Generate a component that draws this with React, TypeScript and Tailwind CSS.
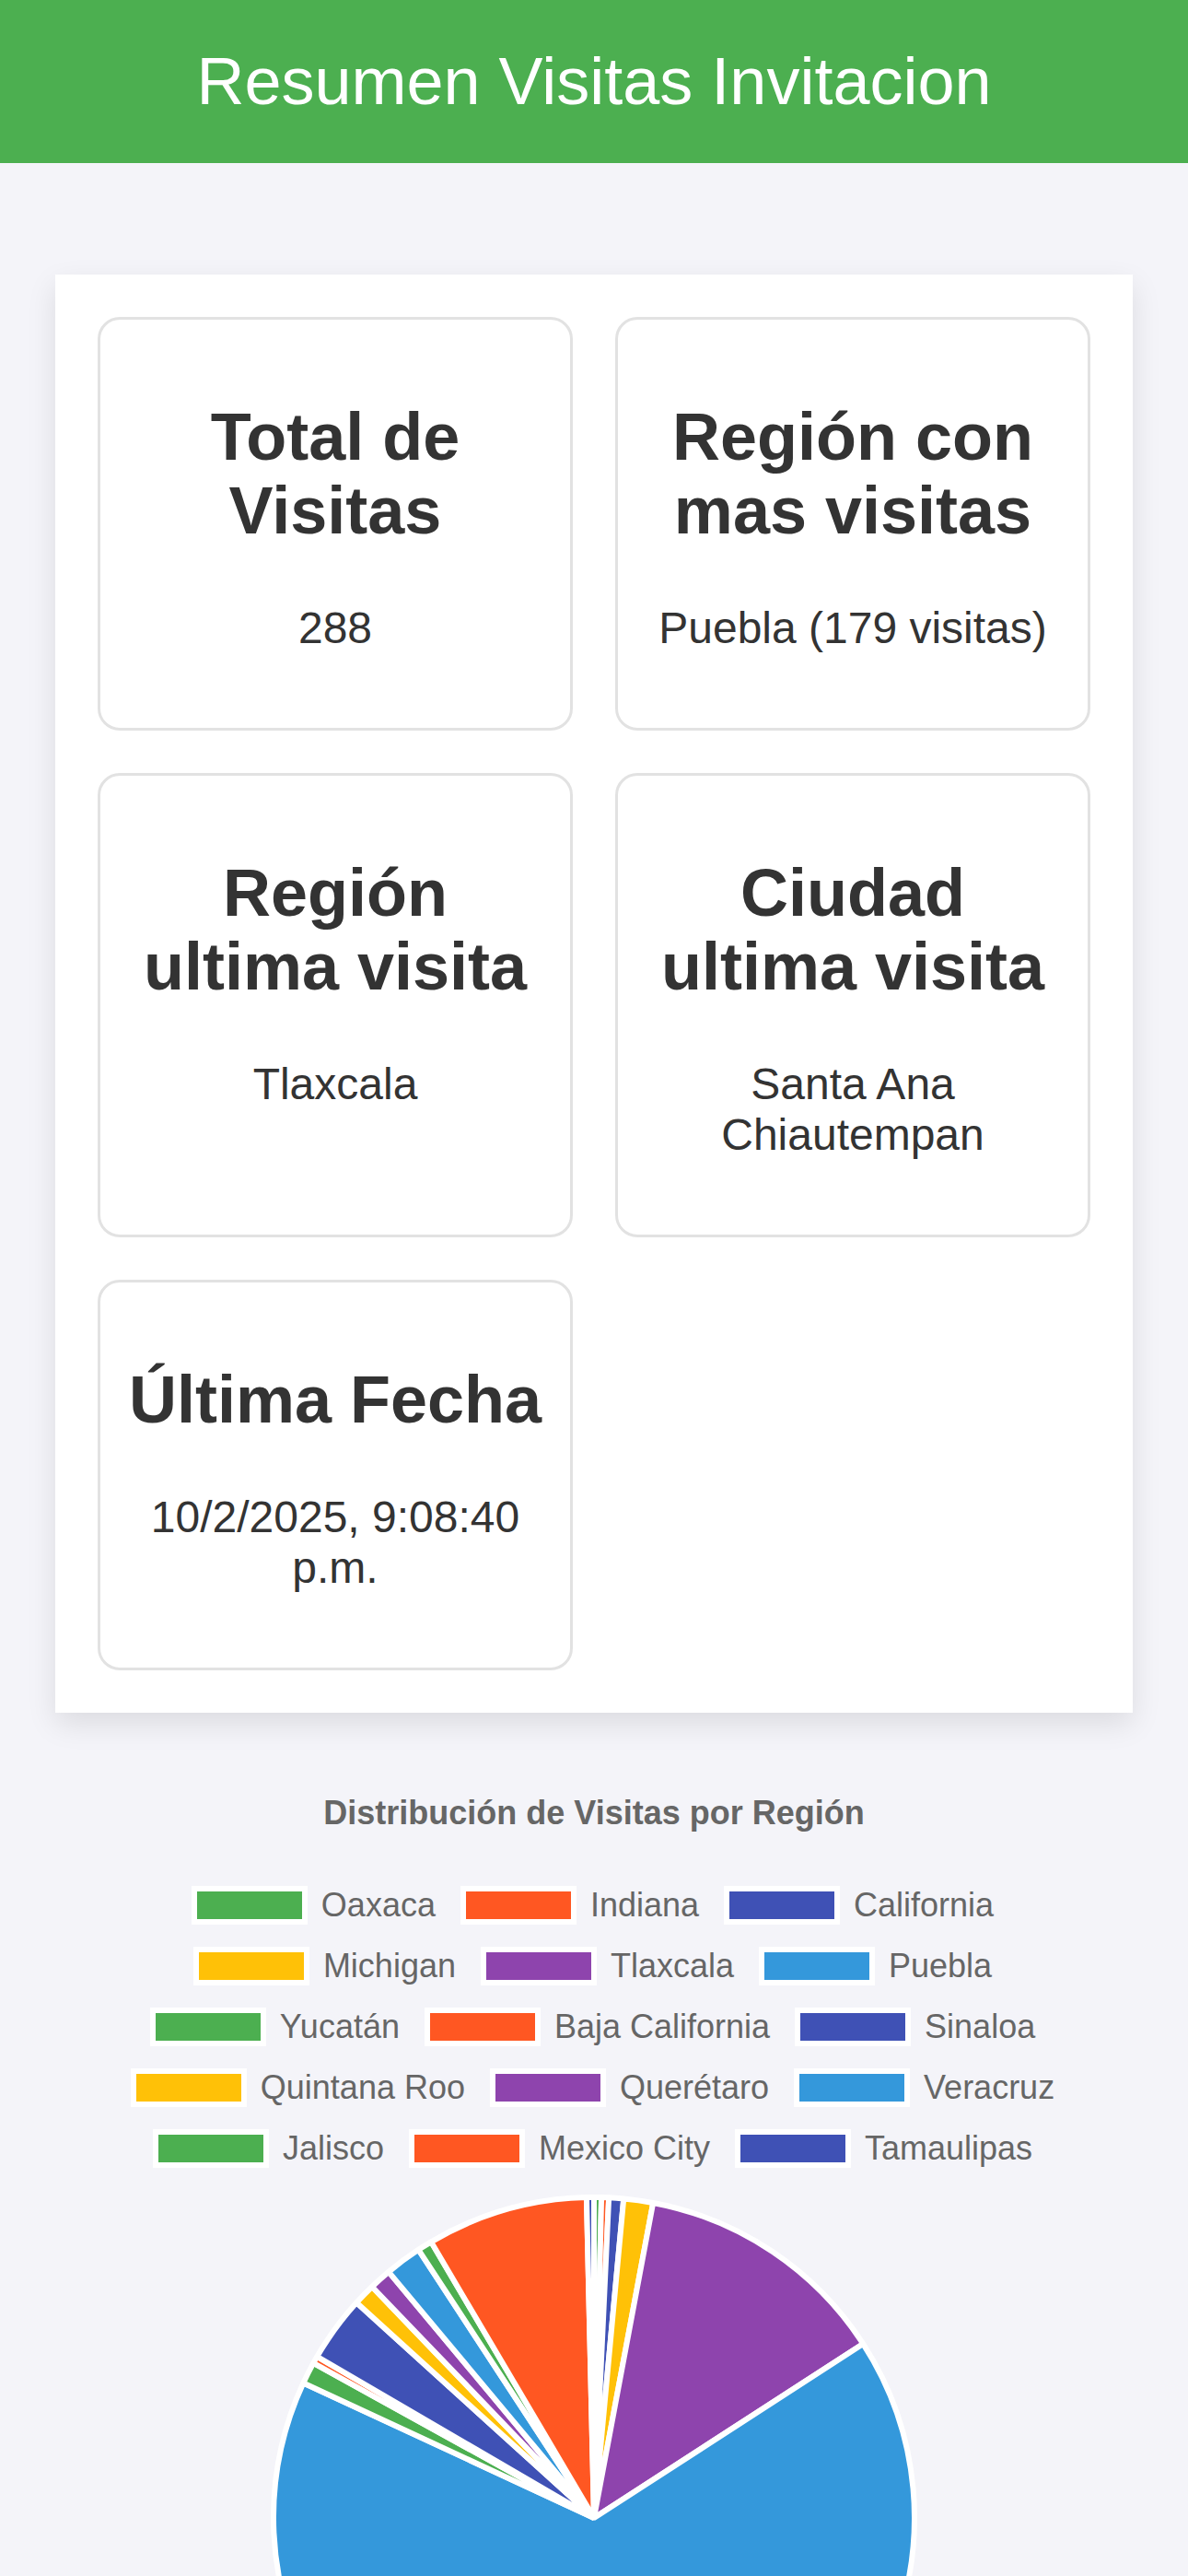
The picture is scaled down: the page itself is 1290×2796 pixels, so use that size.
const font = "font-['Liberation_Sans',Arial,sans-serif]";

type Stat = { title: string; value: string };

const stats: Stat[] = [
  { title: 'Total de Visitas', value: '288' },
  { title: 'Región con mas visitas', value: 'Puebla (179 visitas)' },
  { title: 'Región ultima visita', value: 'Tlaxcala' },
  { title: 'Ciudad ultima visita', value: 'Santa Ana Chiautempan' },
  { title: 'Última Fecha', value: '10/2/2025, 9:08:40 p.m.' },
];

// visits per region, in the order the chart draws them
const regions: [string, number][] = [
  ['Oaxaca', 1],
  ['Indiana', 1],
  ['California', 2],
  ['Michigan', 4],
  ['Tlaxcala', 35],
  ['Puebla', 179],
  ['Yucatán', 3],
  ['Baja California', 1],
  ['Sinaloa', 9],
  ['Quintana Roo', 3],
  ['Querétaro', 3],
  ['Veracruz', 5],
  ['Jalisco', 2],
  ['Mexico City', 22],
  ['Tamaulipas', 1],
];

const palette = ['#4CAF50', '#FF5722', '#3F51B5', '#FFC107', '#8E44AD', '#3498DB'];
const swatch = [
  'bg-[#4CAF50]',
  'bg-[#FF5722]',
  'bg-[#3F51B5]',
  'bg-[#FFC107]',
  'bg-[#8E44AD]',
  'bg-[#3498DB]',
];

function StatCard({ title, value }: Stat) {
  return (
    <div className="rounded-[24px] border-[3px] border-[#e2e2e2] bg-white p-[30px] text-center text-[#333]">
      <h2 className="mt-[57px] mb-[60px] text-[72px] font-bold leading-[80px]">{title}</h2>
      <p className="mb-[51px] text-[48px] leading-[55px]">{value}</p>
    </div>
  );
}

function Legend() {
  const rows: [string, number, number][][] = [];
  regions.forEach(([name, n], i) => {
    if (i % 3 === 0) rows.push([]);
    rows[rows.length - 1].push([name, n, i]);
  });

  return (
    <div className="flex flex-col gap-[30px] pt-[31px]">
      {rows.map((row, r) => (
        <div key={r} className="flex h-[36px] justify-center gap-[30px]">
          {row.map(([name, , i]) => (
            <div key={name} className="flex items-center">
              <span
                className={`box-border block h-[36px] w-[120px] border-[3px] border-white shadow-[0_0_0_3px_#fff] ${swatch[i % 6]}`}
              />
              <span className="ml-[18px] text-[36px] leading-[36px] text-[#666]">{name}</span>
            </div>
          ))}
        </div>
      ))}
    </div>
  );
}

function Pie() {
  const total = regions.reduce((s, [, n]) => s + n, 0);
  const R = 348;
  let start = 0;

  const point = (deg: number) => {
    const rad = (deg * Math.PI) / 180;
    return `${(R * Math.sin(rad)).toFixed(2)} ${(-R * Math.cos(rad)).toFixed(2)}`;
  };

  const slices = regions.map(([name, n], i) => {
    const sweep = (n / total) * 360;
    const a0 = start;
    const a1 = start + sweep;
    start = a1;
    const large = sweep > 180 ? 1 : 0;
    return (
      <path
        key={name}
        d={`M 0 0 L ${point(a0)} A ${R} ${R} 0 ${large} 1 ${point(a1)} Z`}
        fill={palette[i % 6]}
        stroke="#fff"
        strokeWidth={6}
        strokeLinejoin="bevel"
      />
    );
  });

  return (
    <div className="mt-[32px] flex justify-center">
      <svg width="702" height="702" viewBox="-351 -351 702 702">
        {slices}
      </svg>
    </div>
  );
}

export default function App() {
  return (
    <div className={`min-h-screen bg-[#f4f4f9] ${font}`}>
      <header className="bg-[#4CAF50] py-[47px] text-center">
        <h1 className="text-[72px] font-normal leading-[83px] text-white">
          Resumen Visitas Invitacion
        </h1>
      </header>

      <main className="mx-auto mt-[121px] w-[1170px] bg-white p-[46px] shadow-[0_12px_30px_rgba(0,0,0,0.1)]">
        <div className="grid grid-cols-2 gap-[46px]">
          {stats.map((s) => (
            <StatCard key={s.title} {...s} />
          ))}
        </div>
      </main>

      <section className="mt-[57px] h-[881px] overflow-hidden">
        <h3 className="py-[30px] text-center text-[36px] font-bold leading-[43px] text-[#666]">
          Distribución de Visitas por Región
        </h3>
        <Legend />
        <Pie />
      </section>

      <footer className="h-[60px] bg-[#4CAF50]" />
    </div>
  );
}
